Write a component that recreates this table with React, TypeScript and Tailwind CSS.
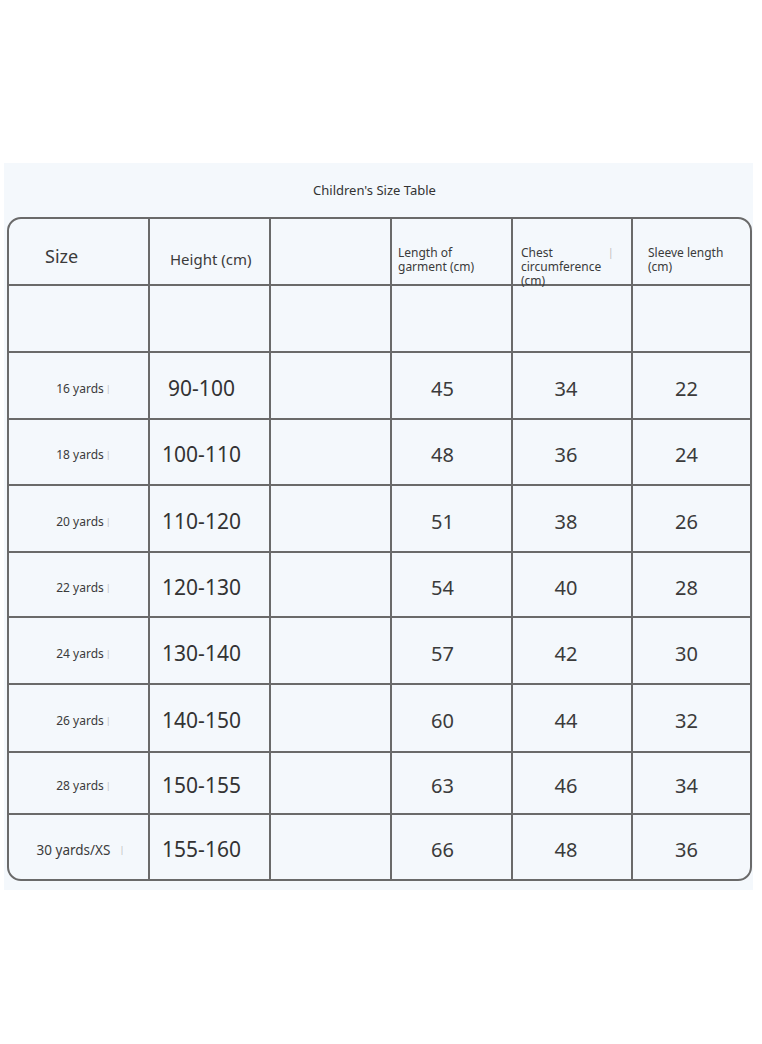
import React from "react";

const rows = [
  { size: "16 yards", height: "90-100", len: "45", chest: "34", sleeve: "22", h: "h-[67px]" },
  { size: "18 yards", height: "100-110", len: "48", chest: "36", sleeve: "24", h: "h-[66px]" },
  { size: "20 yards", height: "110-120", len: "51", chest: "38", sleeve: "26", h: "h-[67px]" },
  { size: "22 yards", height: "120-130", len: "54", chest: "40", sleeve: "28", h: "h-[65px]" },
  { size: "24 yards", height: "130-140", len: "57", chest: "42", sleeve: "30", h: "h-[67px]" },
  { size: "26 yards", height: "140-150", len: "60", chest: "44", sleeve: "32", h: "h-[68px]" },
  { size: "28 yards", height: "150-155", len: "63", chest: "46", sleeve: "34", h: "h-[62px]" },
  { size: "30 yards/XS", height: "155-160", len: "66", chest: "48", sleeve: "36", h: "h-[64px]" },
];

const cols = ["w-[141px]", "w-[121px]", "w-[121px]", "w-[121px]", "w-[120px]", "flex-1"];

export default function App() {
  return (
    <div className="min-h-[1044px] w-[762px] bg-white pt-[163px] font-['Noto_Sans',sans-serif] text-[#3b3b3b]">
      <div className="ml-[4px] w-[749px] bg-[#f4f8fc] pb-[9px]">
        <div className="flex h-[54px] items-center justify-center pr-[8px] pt-[2px] text-[13px] text-[#333]">
          Children's Size Table
        </div>
        <div className="ml-[3px] w-[745px] overflow-hidden rounded-[14px] border-2 border-[#6a6a6a]">
          {/* header */}
          <div className="flex h-[67px] border-b-2 border-[#6a6a6a]">
            <div className={`${cols[0]} flex items-center border-r-2 border-[#6a6a6a] pl-[36px] pt-[10px] text-[18px]`}>Size</div>
            <div className={`${cols[1]} flex items-center border-r-2 border-[#6a6a6a] pl-[20px] pt-[16px] text-[15px]`}>Height (cm)</div>
            <div className={`${cols[2]} border-r-2 border-[#6a6a6a]`} />
            <div className={`${cols[3]} border-r-2 border-[#6a6a6a] pl-[6px] pt-[27px] text-[12px] leading-[14px]`}>
              Length of
              <br />
              garment (cm)
            </div>
            <div className={`${cols[4]} relative border-r-2 border-[#6a6a6a] pl-[8px] pt-[27px] text-[12px] leading-[14px]`}>
              Chest
              <br />
              circumference
              <br />
              (cm)
              <span className="absolute left-[95px] top-[26px] text-[10px] text-[#bbb]">|</span>
            </div>
            <div className={`${cols[5]} pl-[15px] pt-[27px] text-[12px] leading-[14px]`}>
              Sleeve length
              <br />
              (cm)
            </div>
          </div>
          {/* empty row */}
          <div className="flex h-[67px] border-b-2 border-[#6a6a6a]">
            {cols.map((c, i) => (
              <div key={i} className={`${c} ${i < 5 ? "border-r-2 border-[#6a6a6a]" : ""}`} />
            ))}
          </div>
          {rows.map((r, i) => (
            <div key={r.size} className={`flex ${r.h} ${i < rows.length - 1 ? "border-b-2 border-[#6a6a6a]" : ""}`}>
              <div className={`${cols[0]} flex items-center justify-center border-r-2 border-[#6a6a6a] pt-[6px] ${i === 7 ? "pl-[4px] text-[13.5px]" : "pl-[10px] text-[12px]"}`}>
                {r.size}
                <span className={`${i === 7 ? "ml-[9px]" : "ml-[2px]"} text-[9px] text-[#bdbdbd]`}>|</span>
              </div>
              <div className={`${cols[1]} flex items-center justify-center border-r-2 border-[#6a6a6a] pr-[16px] pt-[6px] text-[21px] text-[#333]`}>
                {r.height}
              </div>
              <div className={`${cols[2]} border-r-2 border-[#6a6a6a]`} />
              <div className={`${cols[3]} flex items-center justify-center border-r-2 border-[#6a6a6a] pr-[18px] pt-[6px] text-[20px]`}>
                {r.len}
              </div>
              <div className={`${cols[4]} flex items-center justify-center border-r-2 border-[#6a6a6a] pr-[12px] pt-[6px] text-[20px]`}>
                {r.chest}
              </div>
              <div className={`${cols[5]} flex items-center justify-center pr-[10px] pt-[6px] text-[20px]`}>{r.sleeve}</div>
            </div>
          ))}
        </div>
      </div>
    </div>
  );
}
